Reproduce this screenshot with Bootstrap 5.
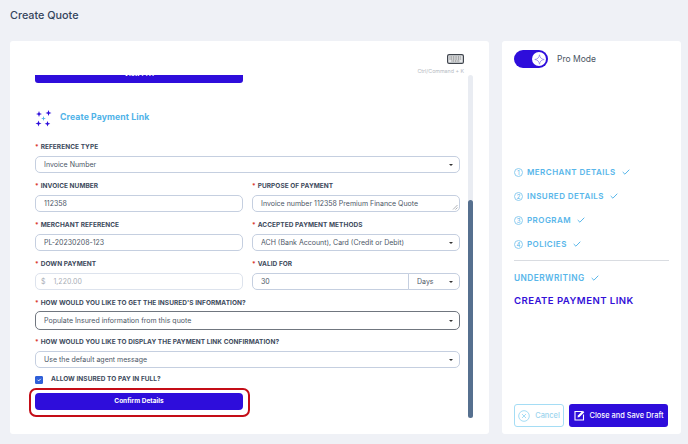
<!DOCTYPE html>
<html lang="en"><head><meta charset="utf-8"><title>Create Quote</title>
<link rel="stylesheet" href="https://cdn.jsdelivr.net/npm/bootstrap@5.3.0/dist/css/bootstrap.min.css">
<style>
html,body{height:444px;overflow:hidden}
body{background:#eff1f6;font-family:"Inter","Liberation Sans",sans-serif;color:#3d4a5c;width:688px}
.page-head{height:41px;padding:9px 10px 0}
.page-title{font-size:10.8px;font-weight:500;color:#33445c;line-height:14px;margin:0}
.shell{height:393px;padding:0 7px 0 10px;gap:13px}
.left-panel{width:479px;border-radius:3px;padding:13px 16px 16px 19px}
.right-panel{width:179px;border-radius:3px;padding:9px 12px 7px 12px}
.shortcut{height:21px;margin-right:9px;line-height:1}
.shortcut span{font-size:5.3px;color:#b5bac2;margin-top:5px}
.scroll-zone{height:343px;overflow:hidden;gap:8px;padding-left:6px}
.form-col{width:425px;flex:none}
.clip-btn{height:17px;width:208px;margin-top:-9px;background:#2e0ddb;color:#fff;font-size:6.5px;font-weight:700;border:0;border-radius:3px;padding:0;display:block}
.track{width:5px;flex:none;background:#e9ecf2;border-radius:3px;height:343px;display:flex;flex-direction:column;justify-content:flex-end}
.thumb{height:218px;background:#56708f;border-radius:3px}
.section-head{margin:25px 0 15px;height:20px;gap:8px}
.section-head span{font-size:8.7px;font-weight:700;color:#4fb3e8;letter-spacing:.1px}
.fld-row{--bs-gutter-x:9px;--bs-gutter-y:0}
.fld{margin-bottom:9px}
.fld label{display:block;font-size:6.5px;font-weight:700;letter-spacing:.05px;color:#3d4a5c;text-transform:uppercase;line-height:9px;margin-bottom:4px}
.fld label i{color:#d8342c;font-style:normal;margin-right:2px}
.form-control.fc,.form-select.fc{height:17px;min-height:17px;font-size:7px;padding:0 8px;border:1.2px solid #c5cfe0;border-radius:5px;color:#4c5666;line-height:15px;box-shadow:none}
.form-select.fc{background-image:url("data:image/svg+xml,%3Csvg xmlns='http://www.w3.org/2000/svg' viewBox='0 0 6 4'%3E%3Cpath d='M1 1h4L3 3z' fill='%23333'/%3E%3C/svg%3E");background-position:right 5px center;background-size:6px 4px}
.form-select.fc.focused{border-color:#70767f;border-width:1.5px;height:19px;margin-top:-1px;margin-bottom:-1px}
.form-control.ta{position:relative;overflow:hidden}
.grip{position:absolute;right:1px;bottom:1px}
.form-control.fc.off{color:#a9aeb6;border-color:#dde3ed;padding:0 5px}
.cur-sign{margin-right:8px}
.input-group .fc.unit{flex:0 0 52px;width:52px}
.check-line{gap:8px;height:11px;margin-top:-3px;margin-bottom:3px}
.check-line .form-check-input{width:8px;height:8px;margin:0;border-radius:1px;background-color:#2f5fd8;border-color:#2f5fd8;flex:none}
.check-line label{font-size:6.5px;font-weight:700;letter-spacing:.05px;color:#3d4a5c;margin:0}
.confirm-wrap{width:221px;margin-left:-6px;border:2px solid #c40d17;border-radius:7px;padding:3px 5px 5px 4px}
.confirm{height:17px;background:#2e0ddb;color:#fff;font-size:6.5px;font-weight:700;border:0;border-radius:4px;padding:0;width:208px;display:block}
.toggle-line{gap:9px;height:18px}
.toggler{width:34px;height:18px;border-radius:9px;background:#2e0ddb;position:relative;flex:none}
.knob{position:absolute;right:2px;top:2px;width:14px;height:14px;border-radius:50%;background:#fff;display:flex;align-items:center;justify-content:center}
.toggle-line span{font-size:8.5px;color:#4b5563;font-weight:400}
.steps{margin-top:92px}
.step{height:24px;gap:4px;font-size:8px;font-weight:600;letter-spacing:.45px;color:#58b6ea}
.num{width:9px;height:9px;border:1px solid #8ecdf0;border-radius:50%;font-size:6px;font-weight:400;display:flex;align-items:center;justify-content:center;letter-spacing:0;flex:none}
.step svg{margin-left:2px}
.rule{border:0;border-top:1px solid #d9dce1;opacity:1;margin:4px 0 5px}
.sub-step{height:24px;gap:6px;font-size:8.3px;font-weight:600;letter-spacing:.45px;color:#58b6ea}
.now-step{font-size:9.6px;font-weight:600;letter-spacing:.45px;color:#3410d8;margin-top:4px;line-height:14px}
.actions{gap:5px;margin-top:auto}
.act{height:23px;border-radius:3px;font-size:7.4px;padding:0;display:flex;align-items:center;justify-content:center;gap:5px;font-weight:500}
.act-cancel{width:50px;background:#fff;border:1px solid #a5ddf5;color:#9cd4ee}
.act-save{width:99px;background:#2e0ddb;border:0;color:#fff}
</style></head>
<body>
<div class="page-head"><h1 class="page-title">Create Quote</h1></div>
<div class="shell d-flex">
  <div class="left-panel bg-white d-flex flex-column">
    <div class="shortcut d-flex flex-column align-items-end">
      <svg width="17" height="10" viewBox="0 0 17 10"><rect x=".6" y=".6" width="15.8" height="8.8" rx="1.5" fill="#e6e8ea" stroke="#3f444c" stroke-width="1.2"/><path d="M2.5 3h12M2.5 5h12M4.5 7h8" stroke="#666" stroke-width="1" stroke-dasharray="1 .7"/></svg>
      <span>Ctrl/Command + K</span>
    </div>
    <div class="scroll-zone d-flex">
      <div class="form-col">
        <button class="clip-btn" type="button">View PFA</button>
        <div class="section-head d-flex align-items-center">
          <svg width="17" height="17" viewBox="0 0 17 17"><g fill="#2e0ddb"><path d="M4 1l.8 2.200L7 4 4.800 4.800 4 7 3.200 4.800 1 4 3.200 3.200z"/><path d="M13.500 0l.8 2.200 2.200.8-2.200.8-.8 2.200-.8-2.200-2.200-.8 2.200-.8z"/><path d="M3.500 10.500l.8 2.200 2.200.8-2.200.8-.8 2.200-.8-2.200-2.200-.8 2.200-.8z"/><path d="M12.500 11l.8 2 2 .8-2 .8-.8 2-.8-2-2-.8 2-.8z"/></g><path d="M8.500 6l.6 1.900 1.900.6-1.900.6-.6 1.900-.6-1.900-1.900-.6 1.900-.6z" fill="#4fb3e8"/></svg>
          <span>Create Payment Link</span>
        </div>
        <div class="fld"><label><i>*</i>Reference Type</label>
          <select class="form-select fc"><option>Invoice Number</option></select></div>
        <div class="row fld-row">
          <div class="col-6 fld"><label><i>*</i>Invoice Number</label><input class="form-control fc" value="112358"></div>
          <div class="col-6 fld"><label><i>*</i>Purpose of Payment</label>
            <div class="form-control fc ta">Invoice number 112358 Premium Finance Quote<svg class="grip" width="6" height="6" viewBox="0 0 6 6"><path d="M1 5.500L5.500 1M3.500 5.500l2-2" stroke="#8a8f98" stroke-width=".7"/></svg></div></div>
        </div>
        <div class="row fld-row">
          <div class="col-6 fld"><label><i>*</i>Merchant Reference</label><input class="form-control fc" value="PL-20230208-123"></div>
          <div class="col-6 fld"><label><i>*</i>Accepted Payment Methods</label>
            <select class="form-select fc"><option>ACH (Bank Account), Card (Credit or Debit)</option></select></div>
        </div>
        <div class="row fld-row">
          <div class="col-6 fld"><label><i>*</i>Down Payment</label>
            <div class="form-control fc off"><span class="cur-sign">$</span>1,220.00</div></div>
          <div class="col-6 fld"><label><i>*</i>Valid For</label>
            <div class="input-group"><input class="form-control fc" value="30"><select class="form-select fc unit"><option>Days</option></select></div></div>
        </div>
        <div class="fld"><label><i>*</i>How would you like to get the insured's information?</label>
          <select class="form-select fc focused"><option>Populate Insured information from this quote</option></select></div>
        <div class="fld"><label><i>*</i>How would you like to display the payment link confirmation?</label>
          <select class="form-select fc"><option>Use the default agent message</option></select></div>
        <div class="check-line d-flex align-items-center"><input class="form-check-input" type="checkbox" checked id="pf"><label for="pf">ALLOW INSURED TO PAY IN FULL?</label></div>
        <div class="confirm-wrap"><button class="confirm" type="button">Confirm Details</button></div>
      </div>
      <div class="track"><div class="thumb"></div></div>
    </div>
  </div>
  <div class="right-panel bg-white d-flex flex-column">
    <div class="toggle-line d-flex align-items-center">
      <div class="toggler"><div class="knob"><svg width="11" height="11" viewBox="0 0 11 11"><path d="M5.500 .8C6 3.800 7.200 5 10.200 5.500 7.200 6 6 7.200 5.500 10.200 5 7.200 3.800 6 .8 5.500 3.800 5 5 3.800 5.500 .8z" fill="none" stroke="#8f80ee" stroke-width=".8"/></svg></div></div>
      <span>Pro Mode</span>
    </div>
    <div class="steps">
      <div class="step d-flex align-items-center"><span class="num">1</span>MERCHANT DETAILS<svg width="8" height="6" viewBox="0 0 8 6"><path d="M.7 3l2.200 2.200L7.300.7" fill="none" stroke="#58b6ea"/></svg></div>
      <div class="step d-flex align-items-center"><span class="num">2</span>INSURED DETAILS<svg width="8" height="6" viewBox="0 0 8 6"><path d="M.7 3l2.200 2.200L7.300.7" fill="none" stroke="#58b6ea"/></svg></div>
      <div class="step d-flex align-items-center"><span class="num">3</span>PROGRAM<svg width="8" height="6" viewBox="0 0 8 6"><path d="M.7 3l2.200 2.200L7.300.7" fill="none" stroke="#58b6ea"/></svg></div>
      <div class="step d-flex align-items-center"><span class="num">4</span>POLICIES<svg width="8" height="6" viewBox="0 0 8 6"><path d="M.7 3l2.200 2.200L7.300.7" fill="none" stroke="#58b6ea"/></svg></div>
      <hr class="rule">
      <div class="sub-step d-flex align-items-center">UNDERWRITING<svg width="8" height="6" viewBox="0 0 8 6"><path d="M.7 3l2.200 2.200L7.300.7" fill="none" stroke="#58b6ea"/></svg></div>
      <div class="now-step">CREATE PAYMENT LINK</div>
    </div>
    <div class="actions d-flex">
      <button class="act act-cancel" type="button"><svg width="12" height="12" viewBox="0 0 12 12"><circle cx="6" cy="6" r="5.300" fill="none" stroke="#a5ddf5"/><path d="M4 4l4 4M8 4L4 8" stroke="#a5ddf5"/></svg>Cancel</button>
      <button class="act act-save" type="button"><svg width="11" height="11" viewBox="0 0 11 11"><path d="M8 1.500H1v8.500h8.500V4.500" fill="none" stroke="#fff" stroke-width="1.100"/><path d="M3.500 7.500l.4-2L8.800.8l1.500 1.500-4.800 4.800z" fill="#fff"/></svg>Close and Save Draft</button>
    </div>
  </div>
</div>
</body></html>
